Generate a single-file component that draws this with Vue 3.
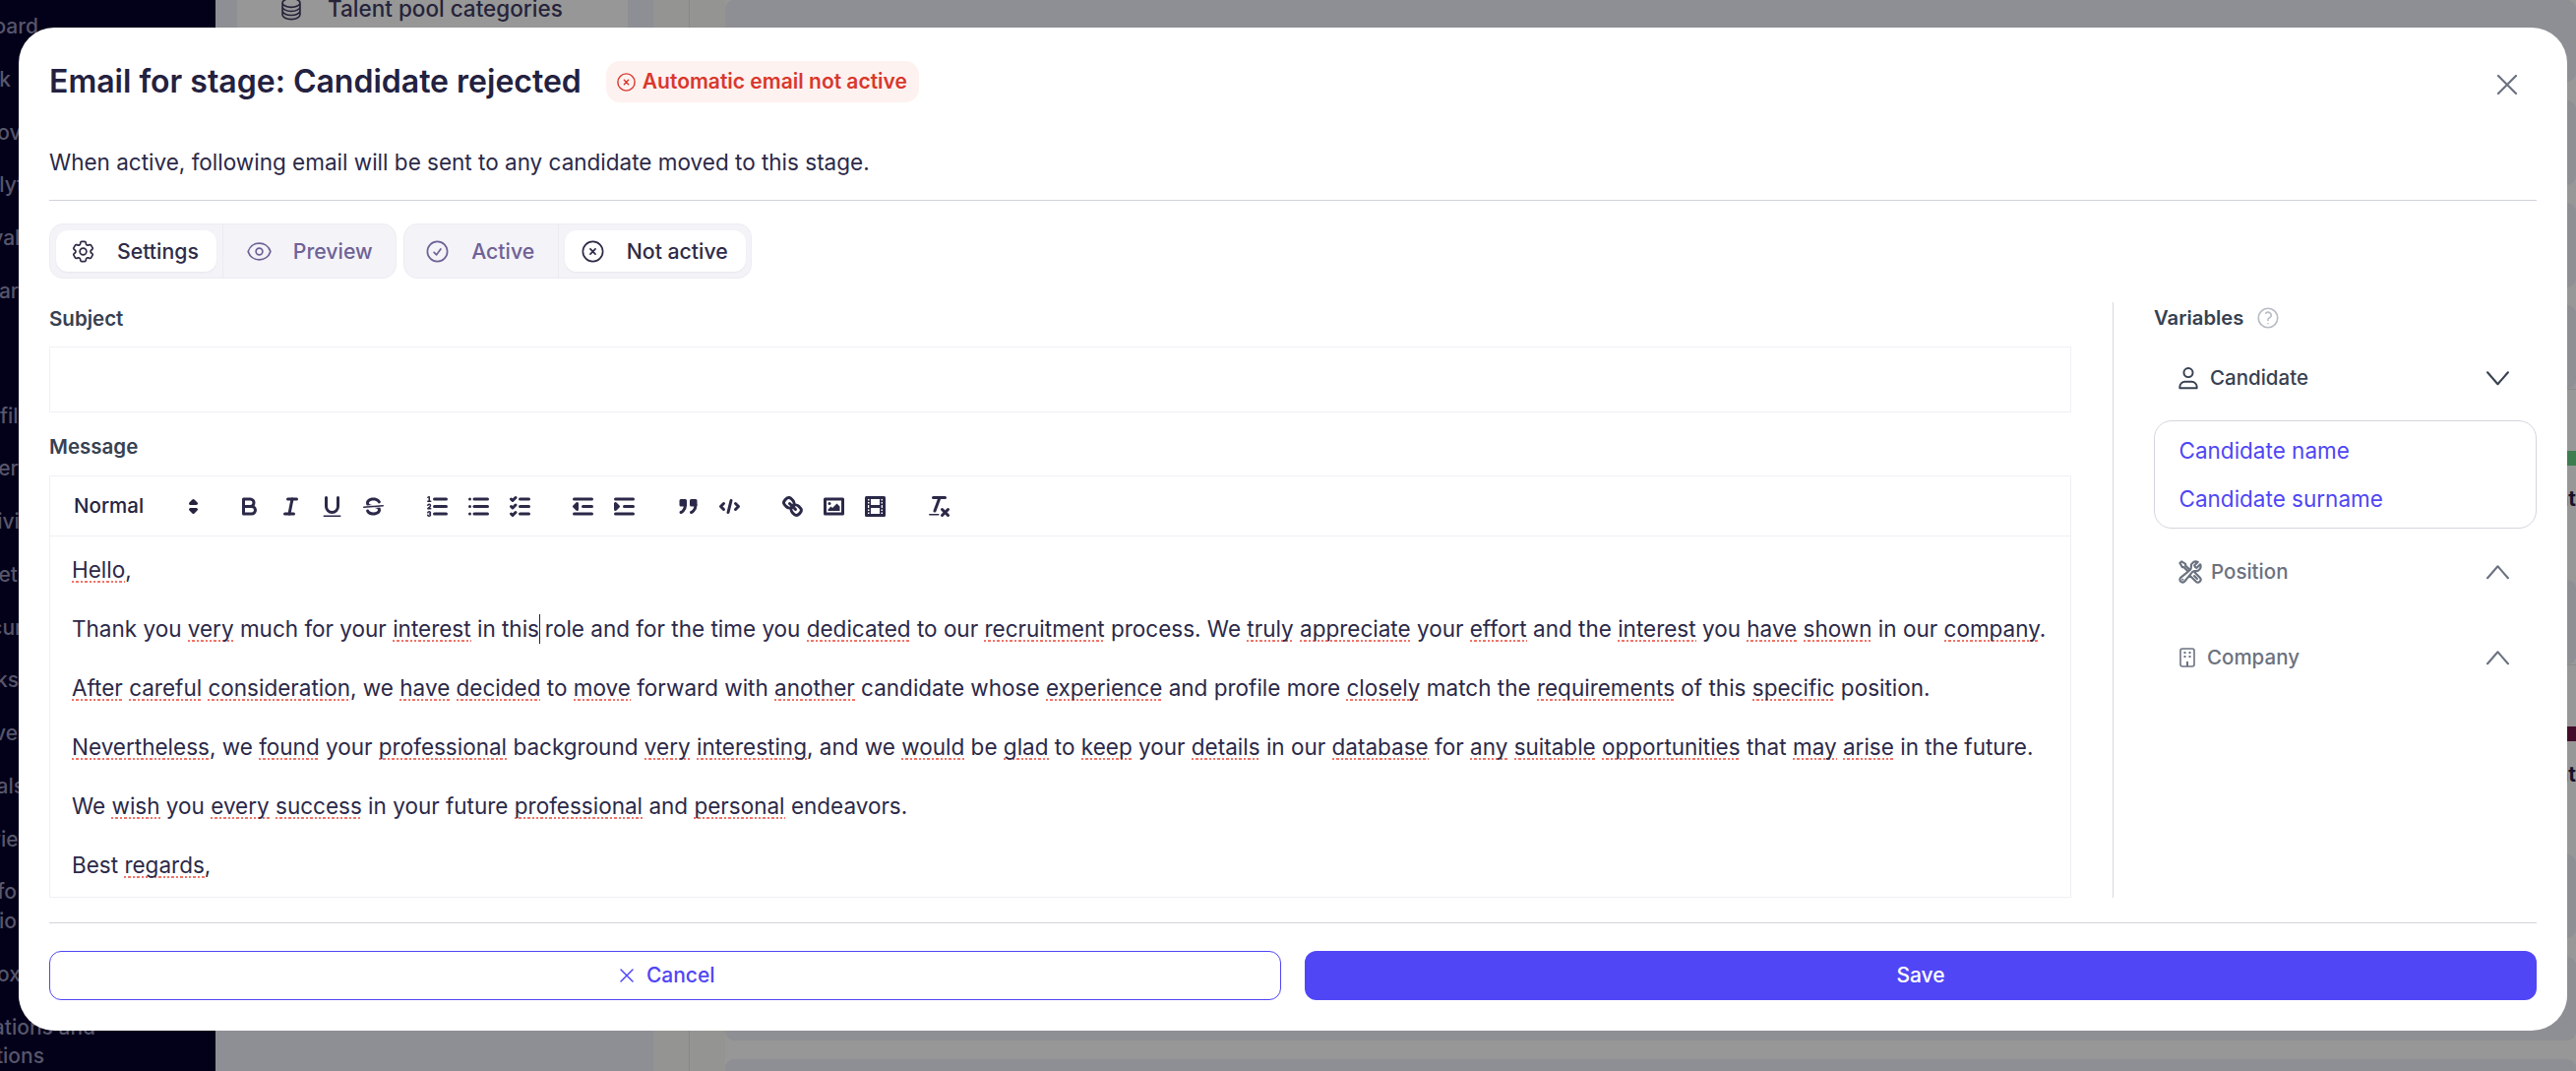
<template>
  <div class="page">
    <aside class="sidebar">
      <div
        v-for="item in navItems"
        :key="item.text"
        class="nav-item"
        :style="{ width: item.tail + 'px', marginTop: (item.gap || 0) + 'px' }"
      >
        <span>{{ item.text }}</span>
      </div>
    </aside>

    <div class="subnav">
      <div class="subnav-panel">
        <div class="subnav-row">
          <svg class="db-icon" fill="none" stroke="currentColor" viewBox="0 0 24 24">
            <path stroke-width="1.5" stroke-linecap="round" stroke-linejoin="round" d="M20.25 6.375c0 2.278-3.694 4.125-8.25 4.125S3.75 8.653 3.75 6.375m16.5 0c0-2.278-3.694-4.125-8.25-4.125S3.75 4.097 3.75 6.375m16.5 0v11.25c0 2.278-3.694 4.125-8.25 4.125s-8.25-1.847-8.25-4.125V6.375m16.5 0v3.75m-16.5-3.75v3.75m16.5 0v3.75C20.25 16.153 16.556 18 12 18s-8.25-1.847-8.25-4.125v-3.75m16.5 0c0 2.278-3.694 4.125-8.25 4.125s-8.25-1.847-8.25-4.125" />
          </svg>
          <span>Talent pool categories</span>
        </div>
      </div>
    </div>

    <div class="rail"></div>

    <div class="board">
      <template v-for="(row, i) in boardRows" :key="i">
        <div v-if="row.bar" class="stage" :style="{ height: row.h + 'px' }">
          <div class="stage-bar" :style="{ background: row.bar }"></div>
          <div class="stage-text">Count:</div>
        </div>
        <div v-else class="card" :style="{ height: row.h + 'px', marginBottom: row.mb + 'px' }"></div>
      </template>
    </div>

    <div class="modal">
      <div class="modal-head">
        <h2>Email for stage: Candidate rejected</h2>
        <span class="badge">
          <svg fill="none" stroke="currentColor" viewBox="0 0 24 24">
            <path stroke-width="1.5" stroke-linecap="round" stroke-linejoin="round" d="m9.75 9.75 4.5 4.5m0-4.5-4.5 4.5M21 12a9 9 0 1 1-18 0 9 9 0 0 1 18 0Z" />
          </svg>
          Automatic email not active
        </span>
        <button class="close-btn">
          <svg fill="none" stroke="currentColor" viewBox="0 0 24 24">
            <path stroke-width="1.5" stroke-linecap="round" stroke-linejoin="round" d="M6 18 18 6M6 6l12 12" />
          </svg>
        </button>
      </div>
      <p class="desc">When active, following email will be sent to any candidate moved to this stage.</p>
      <hr class="rule rule-top" />

      <div class="tabs">
        <div class="tab-group">
          <button class="tab tab-on">
            <svg fill="none" stroke="currentColor" viewBox="0 0 24 24">
              <path stroke-width="1.5" stroke-linecap="round" stroke-linejoin="round" d="M9.594 3.94c.09-.542.56-.94 1.11-.94h2.593c.55 0 1.02.398 1.11.94l.213 1.281c.063.374.313.686.645.87.074.04.147.083.22.127.325.196.72.257 1.075.124l1.217-.456a1.125 1.125 0 0 1 1.37.49l1.296 2.247a1.125 1.125 0 0 1-.26 1.431l-1.003.827c-.293.241-.438.613-.43.992a7.723 7.723 0 0 1 0 .255c-.008.378.137.75.43.991l1.004.827c.424.35.534.955.26 1.43l-1.298 2.247a1.125 1.125 0 0 1-1.369.491l-1.217-.456c-.355-.133-.75-.072-1.076.124a6.47 6.47 0 0 1-.22.128c-.331.183-.581.495-.644.869l-.213 1.281c-.09.543-.56.94-1.11.94h-2.594c-.55 0-1.019-.398-1.11-.94l-.213-1.281c-.062-.374-.312-.686-.644-.87a6.52 6.52 0 0 1-.22-.127c-.325-.196-.72-.257-1.076-.124l-1.217.456a1.125 1.125 0 0 1-1.369-.49l-1.297-2.247a1.125 1.125 0 0 1 .26-1.431l1.004-.827c.292-.24.437-.613.43-.991a6.932 6.932 0 0 1 0-.255c.007-.38-.138-.751-.43-.992l-1.004-.827a1.125 1.125 0 0 1-.26-1.43l1.297-2.247a1.125 1.125 0 0 1 1.37-.491l1.216.456c.356.133.751.072 1.076-.124.072-.044.146-.086.22-.128.332-.183.582-.495.644-.869l.214-1.28Z" />
              <path stroke-width="1.5" stroke-linecap="round" stroke-linejoin="round" d="M15 12a3 3 0 1 1-6 0 3 3 0 0 1 6 0Z" />
            </svg>
            Settings
          </button>
          <span class="tab-sep sep-after-on"></span>
          <button class="tab">
            <svg fill="none" stroke="currentColor" viewBox="0 0 24 24">
              <path stroke-width="1.5" stroke-linecap="round" stroke-linejoin="round" d="M2.036 12.322a1.012 1.012 0 0 1 0-.639C3.423 7.51 7.36 4.5 12 4.5c4.638 0 8.573 3.007 9.963 7.178.07.207.07.431 0 .639C20.577 16.49 16.64 19.5 12 19.5c-4.638 0-8.573-3.007-9.963-7.178Z" />
              <path stroke-width="1.5" stroke-linecap="round" stroke-linejoin="round" d="M15 12a3 3 0 1 1-6 0 3 3 0 0 1 6 0Z" />
            </svg>
            Preview
          </button>
        </div>
        <div class="tab-group">
          <button class="tab">
            <svg fill="none" stroke="currentColor" viewBox="0 0 24 24">
              <path stroke-width="1.5" stroke-linecap="round" stroke-linejoin="round" d="M9 12.75 11.25 15 15 9.75M21 12a9 9 0 1 1-18 0 9 9 0 0 1 18 0Z" />
            </svg>
            Active
          </button>
          <span class="tab-sep"></span>
          <button class="tab tab-on">
            <svg fill="none" stroke="currentColor" viewBox="0 0 24 24">
              <path stroke-width="1.5" stroke-linecap="round" stroke-linejoin="round" d="m9.75 9.75 4.5 4.5m0-4.5-4.5 4.5M21 12a9 9 0 1 1-18 0 9 9 0 0 1 18 0Z" />
            </svg>
            Not active
          </button>
        </div>
      </div>

      <div class="body">
        <div class="form">
          <label class="field-label">Subject</label>
          <div class="subject-input"></div>
          <label class="field-label message-label">Message</label>
          <div class="editor">
            <div class="toolbar">
              <div class="picker">
                <span>Normal</span>
                <svg class="picker-arrows" viewBox="0 0 18 18">
                  <polygon points="7 11 9 13 11 11 7 11" />
                  <polygon points="7 7 9 5 11 7 7 7" />
                </svg>
              </div>
              <div class="tool-group">
                <button class="tool"><svg viewBox="0 0 18 18"><path class="st" d="M5,4H9.5A2.5,2.5,0,0,1,12,6.5v0A2.5,2.5,0,0,1,9.5,9H5A0,0,0,0,1,5,9V4A0,0,0,0,1,5,4Z" /><path class="st" d="M5,9h5.5A2.5,2.5,0,0,1,13,11.5v0A2.5,2.5,0,0,1,10.5,14H5a0,0,0,0,1,0,0V9A0,0,0,0,1,5,9Z" /></svg></button>
                <button class="tool"><svg viewBox="0 0 18 18"><line class="st" x1="7" x2="13" y1="4" y2="4" /><line class="st" x1="5" x2="11" y1="14" y2="14" /><line class="st" x1="8" x2="10" y1="14" y2="4" /></svg></button>
                <button class="tool"><svg viewBox="0 0 18 18"><path class="st" d="M5,3V9a4.012,4.012,0,0,0,4,4H9a4.012,4.012,0,0,0,4-4V3" /><rect class="fl" height="1" rx="0.5" ry="0.5" width="12" x="3" y="15" /></svg></button>
                <button class="tool"><svg viewBox="0 0 18 18"><line class="st thin" x1="15.5" x2="2.5" y1="8.5" y2="9.5" /><path class="fl" d="M9.007,8C6.542,7.791,6,7.519,6,6.5,6,5.792,7.283,5,9,5c1.571,0,2.765.679,2.969,1.309a1,1,0,0,0,1.9-.617C13.356,4.106,11.354,3,9,3,6.2,3,4,4.538,4,6.5a3.2,3.2,0,0,0,.5,1.843Z" /><path class="fl" d="M8.984,10C11.457,10.208,12,10.479,12,11.5c0,.708-1.283,1.5-3,1.5-1.571,0-2.765-.679-2.969-1.309a1,1,0,1,0-1.9.617C4.644,13.894,6.646,15,9,15c2.8,0,5-1.538,5-3.5a3.2,3.2,0,0,0-.5-1.843Z" /></svg></button>
              </div>
              <div class="tool-group">
                <button class="tool"><svg viewBox="0 0 18 18"><line class="st" x1="7" x2="15" y1="4" y2="4" /><line class="st" x1="7" x2="15" y1="9" y2="9" /><line class="st" x1="7" x2="15" y1="14" y2="14" /><line class="st thin" x1="2.5" x2="4.5" y1="5.5" y2="5.5" /><path class="fl" d="M3.5,6A0.5,0.5,0,0,1,3,5.5V3.085l-0.276.138A0.5,0.5,0,0,1,2.053,3c-0.124-.247-0.023-0.324.224-0.447l1-.5A0.5,0.5,0,0,1,4,2.5v3A0.5,0.5,0,0,1,3.5,6Z" /><path class="st thin" d="M4.5,10.5h-2c0-.234,1.85-1.076,1.85-2.234A0.959,0.959,0,0,0,2.5,8.156" /><path class="st thin" d="M2.5,14.846a0.959,0.959,0,0,0,1.85-.109A0.7,0.7,0,0,0,3.75,14a0.688,0.688,0,0,0,.6-0.736,0.959,0.959,0,0,0-1.85-.109" /></svg></button>
                <button class="tool"><svg viewBox="0 0 18 18"><line class="st" x1="6" x2="15" y1="4" y2="4" /><line class="st" x1="6" x2="15" y1="9" y2="9" /><line class="st" x1="6" x2="15" y1="14" y2="14" /><line class="st" x1="3" x2="3" y1="4" y2="4" /><line class="st" x1="3" x2="3" y1="9" y2="9" /><line class="st" x1="3" x2="3" y1="14" y2="14" /></svg></button>
                <button class="tool"><svg viewBox="0 0 18 18"><line class="st" x1="9" x2="15" y1="4" y2="4" /><polyline class="st" points="3 4 4 5 6 3" /><line class="st" x1="9" x2="15" y1="14" y2="14" /><polyline class="st" points="3 14 4 15 6 13" /><line class="st" x1="9" x2="15" y1="9" y2="9" /><polyline class="st" points="3 9 4 10 6 8" /></svg></button>
              </div>
              <div class="tool-group">
                <button class="tool"><svg viewBox="0 0 18 18"><line class="st" x1="3" x2="15" y1="14" y2="14" /><line class="st" x1="3" x2="15" y1="4" y2="4" /><line class="st" x1="9" x2="15" y1="9" y2="9" /><polyline class="st fl" points="5 7 5 11 3 9 5 7" /></svg></button>
                <button class="tool"><svg viewBox="0 0 18 18"><line class="st" x1="3" x2="15" y1="14" y2="14" /><line class="st" x1="3" x2="15" y1="4" y2="4" /><line class="st" x1="9" x2="15" y1="9" y2="9" /><polyline class="st fl" points="3 7 3 11 5 9 3 7" /></svg></button>
              </div>
              <div class="tool-group">
                <button class="tool"><svg viewBox="0 0 18 18"><rect class="st fl" height="3" width="3" x="4" y="5" /><rect class="st fl" height="3" width="3" x="11" y="5" /><path class="st fl" d="M7,8c0,4.031-3,5-3,5" /><path class="st fl" d="M14,8c0,4.031-3,5-3,5" /></svg></button>
                <button class="tool"><svg viewBox="0 0 18 18"><polyline class="st" points="5 7 3 9 5 11" /><polyline class="st" points="13 7 15 9 13 11" /><line class="st" x1="10" x2="8" y1="5" y2="13" /></svg></button>
              </div>
              <div class="tool-group">
                <button class="tool"><svg viewBox="0 0 18 18"><line class="st" x1="7" x2="11" y1="7" y2="11" /><path class="st" d="M8.9,4.577a3.476,3.476,0,0,1,.36,4.679A3.476,3.476,0,0,1,4.577,8.9C3.185,7.5,2.035,6.4,4.217,4.217S7.5,3.185,8.9,4.577Z" /><path class="st" d="M13.423,9.1a3.476,3.476,0,0,0-4.679-.36,3.476,3.476,0,0,0,.36,4.679c1.392,1.392,2.5,2.542,4.679.36S14.815,10.5,13.423,9.1Z" /></svg></button>
                <button class="tool"><svg viewBox="0 0 18 18"><rect class="st" height="10" width="12" x="3" y="4" /><circle class="fl" cx="6" cy="7" r="1" /><polyline class="fl" points="5 12 5 11 7 9 8 10 11 7 13 9 13 12 5 12" /></svg></button>
                <button class="tool"><svg viewBox="0 0 18 18"><rect class="st" height="12" width="12" x="3" y="3" /><rect class="fl" height="12" width="1" x="5" y="3" /><rect class="fl" height="12" width="1" x="12" y="3" /><rect class="fl" height="2" width="8" x="5" y="8" /><rect class="fl" height="1" width="3" x="3" y="5" /><rect class="fl" height="1" width="3" x="3" y="7" /><rect class="fl" height="1" width="3" x="3" y="10" /><rect class="fl" height="1" width="3" x="3" y="12" /><rect class="fl" height="1" width="3" x="12" y="5" /><rect class="fl" height="1" width="3" x="12" y="7" /><rect class="fl" height="1" width="3" x="12" y="10" /><rect class="fl" height="1" width="3" x="12" y="12" /></svg></button>
              </div>
              <div class="tool-group">
                <button class="tool"><svg viewBox="0 0 18 18"><line class="st" x1="5" x2="13" y1="3" y2="3" /><line class="st" x1="6" x2="9.35" y1="12" y2="3" /><line class="st" x1="11" x2="15" y1="11" y2="15" /><line class="st" x1="15" x2="11" y1="11" y2="15" /><rect class="fl" height="1" rx="0.5" ry="0.5" width="7" x="2" y="14" /></svg></button>
              </div>
            </div>
            <div class="editor-text">
              <p v-for="(para, i) in paragraphs" :key="i">
                <template v-for="(part, j) in para" :key="j">
                  <span v-if="part.type === 'typo'" class="typo">{{ part.text }}</span>
                  <span v-else-if="part.type === 'caret'" class="caret"></span>
                  <template v-else>{{ part.text }}</template>
                </template>
              </p>
            </div>
          </div>
        </div>

        <div class="vars">
          <div class="vars-title">
            <span>Variables</span>
            <svg fill="none" stroke="currentColor" viewBox="0 0 24 24">
              <path stroke-width="1.5" stroke-linecap="round" stroke-linejoin="round" d="M9.879 7.519c1.171-1.025 3.071-1.025 4.242 0 1.172 1.025 1.172 2.687 0 3.712-.203.179-.43.326-.67.442-.745.361-1.45.999-1.45 1.827v.75M21 12a9 9 0 1 1-18 0 9 9 0 0 1 18 0Zm-9 5.25h.008v.008H12v-.008Z" />
            </svg>
          </div>

          <div class="acc-row acc-open">
            <svg class="acc-icon" fill="none" stroke="currentColor" viewBox="0 0 24 24">
              <circle cx="12" cy="7" r="4.2" stroke-width="1.8" />
              <path stroke-width="1.8" stroke-linejoin="round" d="M4 21.5v-1.2A4.8 4.8 0 0 1 8.8 15.5h6.4a4.8 4.8 0 0 1 4.8 4.8v1.2Z" />
            </svg>
            <span>Candidate</span>
            <svg class="chev" fill="none" stroke="currentColor" viewBox="0 0 24 24">
              <path stroke-width="2" stroke-linecap="round" stroke-linejoin="round" d="m2 6 10 11.5L22 6" />
            </svg>
          </div>
          <div class="var-box">
            <a>Candidate name</a>
            <a>Candidate surname</a>
          </div>

          <div class="acc-row acc-position">
            <svg class="acc-icon wide" fill="none" stroke="currentColor" viewBox="0 0 24 24">
              <path stroke-width="2" stroke-linecap="round" stroke-linejoin="round" d="M11.42 15.17 17.25 21A2.652 2.652 0 0 0 21 17.25l-5.877-5.877M11.42 15.17l2.496-3.03c.317-.384.74-.626 1.208-.766M11.42 15.17l-4.655 5.653a2.548 2.548 0 1 1-3.586-3.586l6.837-5.63m5.108-.233c.55-.164 1.163-.188 1.743-.14a4.5 4.5 0 0 0 4.486-6.336l-3.276 3.277a3.004 3.004 0 0 1-2.25-2.25l3.276-3.276a4.5 4.5 0 0 0-6.336 4.486c.091 1.076-.071 2.264-.904 2.95l-.102.085m-1.745 1.437L5.909 7.5H4.5L2.25 3.75l1.5-1.5L7.5 4.5v1.409l4.26 4.26m-1.745 1.437 1.745-1.437m6.615 8.206L15.75 15.75M4.867 19.125h.008v.008h-.008v-.008Z" />
            </svg>
            <span>Position</span>
            <svg class="chev" fill="none" stroke="currentColor" viewBox="0 0 24 24">
              <path stroke-width="2" stroke-linecap="round" stroke-linejoin="round" d="m2 17.5 10-11.5 10 11.5" />
            </svg>
          </div>

          <div class="acc-row acc-company">
            <svg class="acc-icon narrow" fill="none" stroke="currentColor" viewBox="0 0 16 20">
              <rect x="1" y="1" width="14" height="18" rx="2" stroke-width="1.6" />
              <path stroke-width="2" d="M4.5 5h2M9.5 5h2M4.5 9h2M9.5 9h2" />
              <path stroke-width="2" d="M8 14v5" />
            </svg>
            <span>Company</span>
            <svg class="chev" fill="none" stroke="currentColor" viewBox="0 0 24 24">
              <path stroke-width="2" stroke-linecap="round" stroke-linejoin="round" d="m2 17.5 10-11.5 10 11.5" />
            </svg>
          </div>
        </div>
      </div>

      <hr class="rule rule-bottom" />

      <div class="actions">
        <button class="btn btn-cancel">
          <svg fill="none" stroke="currentColor" viewBox="0 0 24 24">
            <path stroke-width="1.5" stroke-linecap="round" stroke-linejoin="round" d="M6 18 18 6M6 6l12 12" />
          </svg>
          Cancel
        </button>
        <button class="btn btn-save">Save</button>
      </div>
    </div>
  </div>
</template>

<script setup>
const navItems = [
  { text: 'Dashboard', tail: 39 },
  { text: 'Work', tail: 11 },
  { text: 'Approvals', tail: 50 },
  { text: 'Analytics', tail: 53 },
  { text: 'Evaluations', tail: 94 },
  { text: 'Calendar', tail: 19 },
  { text: 'Profile', tail: 31, gap: 73 },
  { text: 'Users', tail: 30 },
  { text: 'Activities', tail: 56 },
  { text: 'Assets', tail: 29 },
  { text: 'Documents', tail: 77 },
  { text: 'Tasks', tail: 19 },
  { text: 'Events', tail: 49 },
  { text: 'Referrals', tail: 25 },
  { text: 'Reviews', tail: 47 },
  { text: 'Candidate info', tail: 17 },
  { text: 'Portfolio', tail: 17, gap: -24 },
  { text: 'Inbox', tail: 21 },
  { text: 'Notifications and', tail: 97 },
  { text: 'automations', tail: 45, gap: -24 }
]

const boardRows = [
  { h: 83, mb: 19 },
  { h: 86, mb: 18 },
  { h: 86, mb: 18 },
  { h: 85, mb: 0 },
  { h: 194, bar: '#3d7d4f' },
  { h: 86, mb: 0 },
  { h: 193, bar: '#430d2a' },
  { h: 85, mb: 19 },
  { h: 85, mb: 19 },
  { h: 40, mb: 0 }
]

const source = [
  '*Hello*,',
  'Thank you *very* much for your *interest* in this^ role and for the time you *dedicated* to our *recruitment* process. We *truly* *appreciate* your *effort* and the *interest* you *have* *shown* in our *company*.',
  '*After* *careful* *consideration*, we *have* *decided* to *move* forward with *another* candidate whose *experience* and profile more *closely* match the *requirements* of this *specific* position.',
  '*Nevertheless*, we *found* your *professional* background *very* *interesting*, and we *would* be *glad* to *keep* your *details* in our *database* for *any* *suitable* *opportunities* that *may* *arise* in the future.',
  'We *wish* you *every* *success* in your future *professional* and *personal* endeavors.',
  'Best *regards*,'
]

const paragraphs = source.map((line) =>
  line
    .split(/(\*[^*]+\*|\^)/)
    .filter(Boolean)
    .map((part) => {
      if (part === '^') return { type: 'caret' }
      if (part.startsWith('*')) return { type: 'typo', text: part.slice(1, -1) }
      return { type: 'plain', text: part }
    })
)
</script>

<style>
html,
body {
  margin: 0;
  background: #8e8f94;
}
</style>

<style scoped>
.page {
  position: relative;
  width: 2618px;
  height: 1088px;
  overflow: hidden;
  display: flex;
  background: #8e8f94;
  font-family: Inter, "Liberation Sans", sans-serif;
  font-size: 21px;
  line-height: 30px;
}

.sidebar {
  width: 219px;
  flex-shrink: 0;
  background: #03001a;
  padding-top: 12px;
  box-sizing: border-box;
  display: flex;
  flex-direction: column;
  gap: 23.75px;
  color: #57566a;
  font-size: 21px;
  font-weight: 500;
}

.nav-item {
  display: flex;
  justify-content: flex-end;
  white-space: nowrap;
}

.nav-item span {
  flex-shrink: 0;
}

.subnav {
  width: 445px;
  flex-shrink: 0;
  box-sizing: border-box;
  padding-left: 22px;
}

.subnav-panel {
  width: 397px;
  height: 700px;
  background: #979797;
}

.subnav-row {
  display: flex;
  align-items: center;
  height: 18px;
  padding-left: 42px;
  gap: 24px;
  color: #25233a;
  font-weight: 500;
  font-size: 22.5px;
}

.db-icon {
  width: 26px;
  height: 26px;
}

.rail {
  width: 73px;
  flex-shrink: 0;
  background: linear-gradient(90deg, #949492 36px, #87878b 36px 37px, #949492 37px);
}

.board {
  flex: 1;
  background: #979797;
  display: flex;
  flex-direction: column;
}

.card {
  background: #8e8f94;
  border-radius: 9px;
  flex-shrink: 0;
}

.stage {
  position: relative;
  flex-shrink: 0;
  border-top: 1px solid #8a8a8e;
  box-sizing: border-box;
}

.stage-bar {
  position: absolute;
  left: 0;
  right: 0;
  top: 62px;
  height: 15px;
}

.stage-text {
  position: absolute;
  right: -7px;
  top: 96px;
  font-weight: 700;
  color: #15132a;
}

.modal {
  position: absolute;
  left: 19px;
  top: 28px;
  width: 2590px;
  height: 1019px;
  box-sizing: border-box;
  padding: 34px 31px 31px;
  background: #fff;
  border-radius: 36px;
  display: flex;
  flex-direction: column;
  color: #2b2948;
}

.modal-head {
  display: flex;
  align-items: center;
  height: 42px;
  gap: 25px;
  position: relative;
}

h2 {
  margin: 0;
  font-size: 32px;
  line-height: 42px;
  font-weight: 600;
  color: #232140;
}

.badge {
  display: inline-flex;
  align-items: center;
  gap: 5px;
  height: 42px;
  box-sizing: border-box;
  padding: 0 12px 0 9px;
  border-radius: 14px;
  background: #fef2f1;
  color: #d9382c;
  font-weight: 600;
}

.badge svg {
  width: 23px;
  height: 23px;
}

.close-btn {
  position: absolute;
  right: 12px;
  top: 6px;
  height: 36px;
  width: 36px;
  padding: 0;
  border: 0;
  background: none;
  color: #6b7280;
  display: flex;
  align-items: center;
  justify-content: center;
}

.close-btn svg {
  width: 36px;
  height: 36px;
}

.desc {
  margin: 46px 0 0;
  color: #2b2948;
  font-size: 22.5px;
}

.rule {
  width: 100%;
  height: 1.5px;
  margin: 0;
  border: 0;
  background: #d1d3db;
}

.rule-top {
  margin-top: 22.5px;
}

.tabs {
  display: flex;
  gap: 7px;
  margin-top: 23px;
}

.tab-group {
  display: flex;
  align-items: center;
  height: 56px;
  box-sizing: border-box;
  padding: 0 5.5px;
  background: #f3f3f8;
  border: 1.5px solid #ecedf3;
  border-radius: 14px;
}

.tab-sep {
  width: 1.5px;
  height: 100%;
  margin: 0 6px 0 5.5px;
  background: #ebebf1;
}

.sep-after-on {
  margin: 0 8px 0 6px;
}

.tab {
  display: flex;
  align-items: center;
  gap: 21px;
  height: 42px;
  padding: 0 18px 0 14.5px;
  border: 0;
  border-radius: 12px;
  background: none;
  font: inherit;
  font-size: 21.25px;
  font-weight: 500;
  color: #6f6196;
}

.tab svg {
  width: 27px;
  height: 27px;
}

.tab-on {
  background: #fff;
  color: #2e2c47;
  box-shadow: 0 1px 2px rgba(30, 30, 60, 0.06);
}

.body {
  display: flex;
  margin-top: 24px;
  height: 605px;
}

.form {
  width: 2055px;
  flex-shrink: 0;
  padding-top: 2px;
}

.field-label {
  display: block;
  font-size: 20.5px;
  font-weight: 600;
  color: #374151;
}

.subject-input {
  height: 67px;
  margin-top: 13px;
  box-sizing: border-box;
  border: 1.5px solid #f0f0f6;
}

.message-label {
  margin-top: 20px;
}

.editor {
  margin-top: 14px;
  height: 429px;
  box-sizing: border-box;
  border: 1.5px solid #eff0f6;
  overflow: hidden;
}

.toolbar {
  display: flex;
  align-items: center;
  height: 61px;
  box-sizing: border-box;
  padding: 0 12px;
  border-bottom: 1.5px solid #eff0f6;
}

.picker {
  position: relative;
  width: 147px;
  height: 36px;
  margin-right: 22.5px;
  padding-left: 12px;
  box-sizing: border-box;
  display: flex;
  align-items: center;
  font-size: 20.5px;
  font-weight: 500;
  color: #26243f;
}

.picker-arrows {
  position: absolute;
  right: 0;
  top: 4.5px;
  width: 27px;
  height: 27px;
  fill: #26243f;
  stroke: #26243f;
  stroke-width: 2;
  stroke-linejoin: round;
}

.tool-group {
  display: flex;
  margin-right: 22.5px;
}

.tool {
  width: 42px;
  height: 36px;
  padding: 4.5px 7.5px;
  border: 0;
  background: none;
}

.tool svg {
  display: block;
  width: 27px;
  height: 27px;
}

.st {
  fill: none;
  stroke: #2b2948;
  stroke-width: 2;
  stroke-linecap: round;
  stroke-linejoin: round;
}

.thin {
  stroke-width: 1;
}

.fl {
  fill: #2b2948;
}

.editor-text {
  padding: 18.5px 22px;
  color: #2b2948;
  font-size: 22.5px;
}

.editor-text p {
  margin: 0 0 30px;
  white-space: nowrap;
}

.typo {
  background: repeating-linear-gradient(90deg, #f07468 0 2.4px, transparent 2.4px 4.4px) left bottom / 100% 2px no-repeat;
}

.caret {
  display: inline-block;
  width: 0;
  height: 30px;
  border-left: 1.5px solid #26243f;
  margin-right: -1.5px;
  vertical-align: top;
}

.vars {
  flex: 1;
  margin-left: 42px;
  padding-left: 41px;
  padding-top: 1px;
  border-left: 1.5px solid #d5d9e0;
}

.vars-title {
  display: flex;
  align-items: center;
  gap: 12px;
  font-size: 20.25px;
  font-weight: 600;
  color: #374151;
}

.vars-title svg {
  width: 26px;
  height: 26px;
  color: #b8bcc5;
}

.acc-row {
  display: flex;
  align-items: center;
  padding: 0 27px 0 26px;
  color: #6b7280;
  font-size: 20.5px;
  font-weight: 500;
}

.acc-open {
  margin-top: 31px;
  color: #374151;
}

.acc-position {
  margin-top: 29px;
}

.acc-company {
  margin-top: 57px;
}

.acc-icon {
  width: 26px;
  height: 26px;
  margin: 0 9px 0 -4px;
}

.acc-icon.wide {
  margin: 0 8px 0 -2px;
}

.acc-icon.narrow {
  width: 16px;
  height: 20px;
  margin: 0 12px 0 0;
}

.chev {
  width: 25px;
  height: 25px;
  margin-left: auto;
}

.var-box {
  margin-top: 28px;
  height: 110px;
  box-sizing: border-box;
  padding: 15px 24.5px;
  border: 1.5px solid #d4d6df;
  border-radius: 18px;
  display: flex;
  flex-direction: column;
  gap: 19px;
  color: #4f46f5;
  font-size: 22.5px;
}

.rule-bottom {
  margin-top: 24.5px;
}

.actions {
  display: flex;
  gap: 24px;
  margin-top: 28px;
}

.btn {
  height: 50px;
  border-radius: 12px;
  font: inherit;
  font-weight: 500;
  display: flex;
  align-items: center;
  justify-content: center;
  gap: 7.5px;
}

.btn svg {
  width: 24px;
  height: 24px;
}

.btn-cancel {
  width: 1252px;
  background: #fff;
  border: 1.5px solid #5046f5;
  color: #5046f5;
}

.btn-save {
  flex: 1;
  background: #5046f5;
  border: 0;
  color: #fff;
}
</style>
